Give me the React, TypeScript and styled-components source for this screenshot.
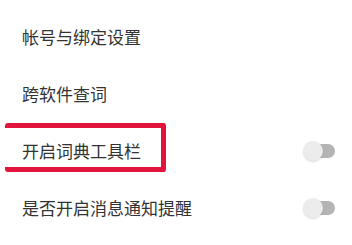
import React from "react";
import styled, { createGlobalStyle } from "styled-components";

const Global = createGlobalStyle`
  html, body { margin: 0; padding: 0; background: #ffffff; }
  body { font-family: "Noto Sans CJK SC", "Noto Sans", sans-serif; }
`;

const List = styled.div`
  display: flex;
  flex-direction: column;
  padding-top: 8px;
  width: 352px;
`;

const Row = styled.div`
  position: relative;
  height: 57px;
  display: flex;
  align-items: center;
  justify-content: space-between;
  padding: 0 17px 0 22px;
`;

const Label = styled.span`
  font-size: 17px;
  color: #333333;
  line-height: 1;
`;

const Highlight = styled.div`
  position: absolute;
  left: 5px;
  top: 1px;
  width: 156px;
  height: 39px;
  border: 5px solid #e0143c;
  border-left: none;
  border-radius: 3px;
  pointer-events: none;
`;

const Switch = styled.div`
  position: relative;
  width: 32px;
  height: 20px;
  display: flex;
  align-items: center;
`;

const Track = styled.div`
  position: absolute;
  left: 6px;
  right: 0;
  height: 14px;
  border-radius: 7px;
  background: #b4b4b4;
`;

const Thumb = styled.div`
  position: relative;
  width: 20px;
  height: 20px;
  border-radius: 50%;
  background: #ececec;
  box-shadow: 0 1px 2px rgba(0, 0, 0, 0.15);
`;

const Toggle = () => (
  <Switch>
    <Track />
    <Thumb />
  </Switch>
);

const items = [
  { label: "帐号与绑定设置", toggle: false, hl: false },
  { label: "跨软件查词", toggle: false, hl: false },
  { label: "开启词典工具栏", toggle: true, hl: true },
  { label: "是否开启消息通知提醒", toggle: true, hl: false },
];

export default function App() {
  return (
    <>
      <Global />
      <List>
        {items.map((it) => (
          <Row key={it.label}>
            <Label>{it.label}</Label>
            {it.toggle && <Toggle />}
            {it.hl && <Highlight />}
          </Row>
        ))}
      </List>
    </>
  );
}
